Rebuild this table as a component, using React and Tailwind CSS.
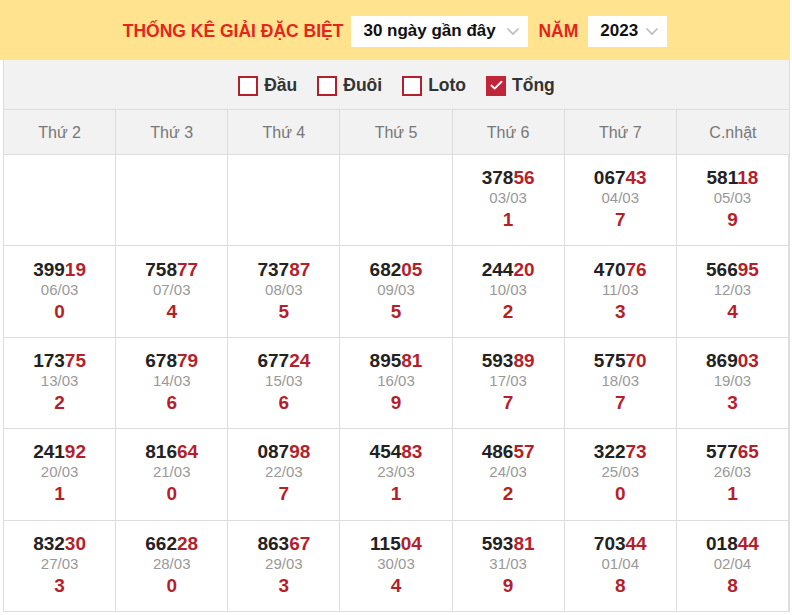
import { Check } from "lucide-react";

const days = ["Thứ 2", "Thứ 3", "Thứ 4", "Thứ 5", "Thứ 6", "Thứ 7", "C.nhật"];

const rows = [
  [null, null, null, null, ["37856", "03/03", 1], ["06743", "04/03", 7], ["58118", "05/03", 9]],
  [["39919", "06/03", 0], ["75877", "07/03", 4], ["73787", "08/03", 5], ["68205", "09/03", 5], ["24420", "10/03", 2], ["47076", "11/03", 3], ["56695", "12/03", 4]],
  [["17375", "13/03", 2], ["67879", "14/03", 6], ["67724", "15/03", 6], ["89581", "16/03", 9], ["59389", "17/03", 7], ["57570", "18/03", 7], ["86903", "19/03", 3]],
  [["24192", "20/03", 1], ["81664", "21/03", 0], ["08798", "22/03", 7], ["45483", "23/03", 1], ["48657", "24/03", 2], ["32273", "25/03", 0], ["57765", "26/03", 1]],
  [["83230", "27/03", 3], ["66228", "28/03", 0], ["86367", "29/03", 3], ["11504", "30/03", 4], ["59381", "31/03", 9], ["70344", "01/04", 8], ["01844", "02/04", 8]],
];

const filters = [
  { label: "Đầu", checked: false },
  { label: "Đuôi", checked: false },
  { label: "Loto", checked: false },
  { label: "Tổng", checked: true },
];

function Chevron() {
  return (
    <svg width="14" height="9" viewBox="0 0 14 9" fill="none" className="text-[#bbb]">
      <path d="M1.5 1.5 L7 7 L12.5 1.5" stroke="currentColor" strokeWidth="1.6" />
    </svg>
  );
}

function Select({ value, width }) {
  return (
    <div className={`flex h-[31px] items-center justify-between bg-white pl-[12px] pr-[8px] ${width}`}>
      <span className="text-[17px] font-bold text-[#111]">{value}</span>
      <Chevron />
    </div>
  );
}

function Cell({ item }) {
  if (!item) return <div className="border-b border-r border-[#ddd]" />;
  const [num, date, sum] = item;
  return (
    <div className="flex flex-col items-center justify-center border-b border-r border-[#ddd] pb-[2px]">
      <p className="text-[19px] font-bold leading-[21px] text-[#222]">
        {num.slice(0, 3)}
        <span className="text-[#b51f2c]">{num.slice(3)}</span>
      </p>
      <p className="text-[15px] leading-[20px] text-[#999]">{date}</p>
      <p className="text-[19px] font-bold leading-[23px] text-[#b51f2c]">{sum}</p>
    </div>
  );
}

export default function App() {
  return (
    <div className="w-[792px] bg-white font-['Liberation_Sans',Arial,sans-serif]">
      <div className="flex h-[60px] w-[790px] items-center justify-center gap-[8px] bg-[#ffe38f] pt-[2px]">
        <h1 className="text-[17.5px] font-bold text-[#e3261c]">THỐNG KÊ GIẢI ĐẶC BIỆT</h1>
        <Select value="30 ngày gần đây" width="w-[177px]" />
        <span className="mx-[2px] text-[17.5px] font-bold text-[#e3261c]">NĂM</span>
        <Select value="2023" width="w-[79px]" />
      </div>

      <div className="mx-[3px] w-[787px] border-l border-r border-[#ddd]">
        <div className="flex h-[50px] items-center justify-center gap-[20px] border-b border-[#ddd] bg-[#f2f2f2] pt-[2px]">
          {filters.map((f) => (
            <label key={f.label} className="flex items-center gap-[6px]">
              {f.checked ? (
                <span className="flex h-[20px] w-[20px] items-center justify-center bg-[#c0263a]">
                  <Check size={15} strokeWidth={3} className="text-white" />
                </span>
              ) : (
                <span className="h-[20px] w-[20px] border-2 border-[#b3202d] bg-white" />
              )}
              <span className="text-[17.5px] font-bold text-[#333]">{f.label}</span>
            </label>
          ))}
        </div>

        <div className="grid grid-cols-7">
          {days.map((d, i) => (
            <div
              key={d}
              className={`flex h-[45px] items-center justify-center border-b border-[#ddd] bg-[#f2f2f2] pt-[2px] text-[16px] text-[#777] ${i < 6 ? "border-r" : ""}`}
            >
              {d}
            </div>
          ))}
        </div>

        <div className="grid grid-cols-7 [grid-auto-rows:91.4px]">
          {rows.flat().map((item, i) => (
            <Cell key={i} item={item} />
          ))}
        </div>
      </div>
    </div>
  );
}
